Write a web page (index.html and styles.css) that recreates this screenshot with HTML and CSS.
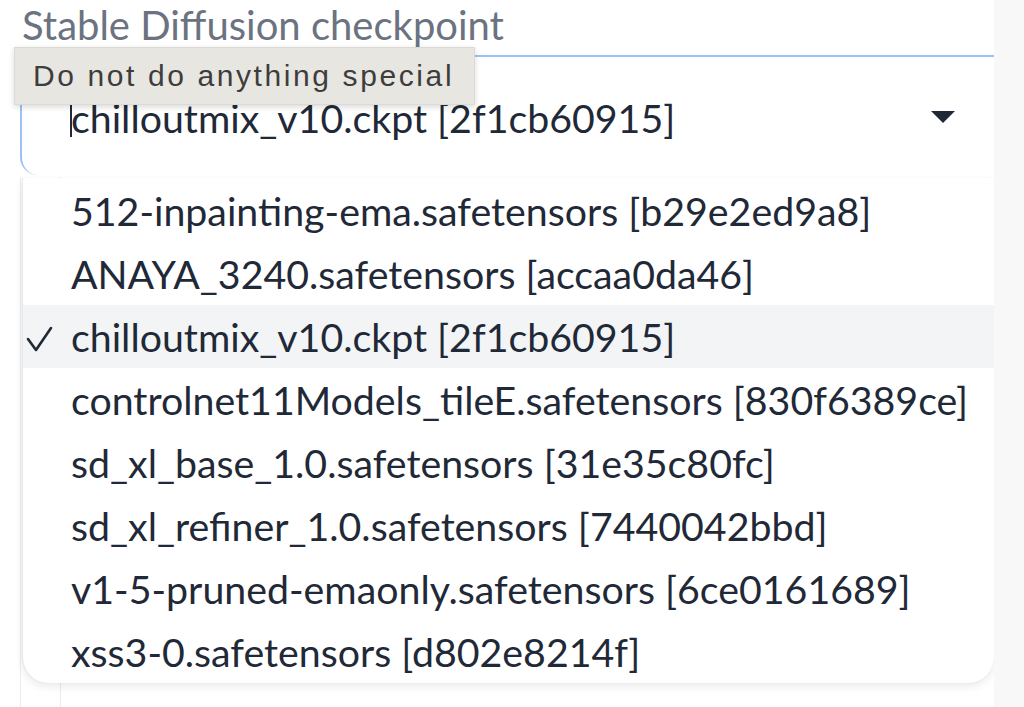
FILE: index.html
```html
<!DOCTYPE html>
<html>
<head>
<meta charset="utf-8">
<link rel="stylesheet" href="styles.css">
</head>
<body>
<div class="page">
  <div class="panel">
    <div class="label">Stable Diffusion checkpoint</div>
    <div class="field">
      <div class="value"><span class="caret"></span>chilloutmix_v10.ckpt [2f1cb60915]</div>
      <svg class="arrow" width="26" height="14" viewBox="0 0 26 14"><path d="M1 1 L25 1 L13 13 Z" fill="#1f2937"/></svg>
    </div>
    <div class="below">
      <div class="ghost"></div>
    </div>
    <ul class="options">
      <li class="opt">512-inpainting-ema.safetensors [b29e2ed9a8]</li>
      <li class="opt">ANAYA_3240.safetensors [accaa0da46]</li>
      <li class="opt selected"><svg class="check" width="30" height="30" viewBox="0 0 30 30"><path d="M2 14 L10 25 L25 3" fill="none" stroke="#1f2937" stroke-width="2.6" stroke-linecap="round" stroke-linejoin="round"/></svg>chilloutmix_v10.ckpt [2f1cb60915]</li>
      <li class="opt">controlnet11Models_tileE.safetensors [830f6389ce]</li>
      <li class="opt">sd_xl_base_1.0.safetensors [31e35c80fc]</li>
      <li class="opt">sd_xl_refiner_1.0.safetensors [7440042bbd]</li>
      <li class="opt">v1-5-pruned-emaonly.safetensors [6ce0161689]</li>
      <li class="opt">xss3-0.safetensors [d802e8214f]</li>
    </ul>
    <div class="tooltip">Do not do anything special</div>
  </div>
</div>
</body>
</html>
```
FILE: styles.css
```css
html, body {
  margin: 0;
  padding: 0;
  background: #f8f8f9;
  height: 707px;
  overflow: hidden;
}
.page {
  width: 994px;
  height: 707px;
  background: #ffffff;
  overflow: hidden;
}
.panel {
  position: relative;
  height: 707px;
  font-family: "Lato", "Noto Sans", sans-serif;
  color: #1f2937;
}
.label {
  padding: 0 0 0 22px;
  height: 55px;
  font-size: 40px;
  line-height: 50px;
  color: #6b7280;
}
.field {
  margin-left: 20px;
  height: 120px;
  border-top: 2px solid #9cc2f4;
  border-left: 2px solid #9cc2f4;
  border-bottom-left-radius: 18px;
  display: flex;
  align-items: center;
  justify-content: space-between;
  padding: 0 38px 0 49px;
  box-sizing: border-box;
}
.value {
  position: relative;
  font-size: 39.3px;
  line-height: 50px;
  margin-top: 4px;
}
.caret {
  position: absolute;
  left: -1px;
  top: 2px;
  width: 2px;
  height: 42px;
  background: #1f2937;
}
.arrow {
  display: block;
  margin-top: 2px;
}
.below {
  margin-top: 2px;
  margin-left: 20px;
  height: 530px;
  border-left: 1px solid #ececf0;
  display: flex;
}
.ghost {
  margin-left: 39px;
  border-left: 1px solid #ececf0;
  height: 100%;
}
.options {
  position: absolute;
  top: 178px;
  left: 22px;
  right: 0;
  margin: 0;
  padding: 1px 0 0;
  list-style: none;
  background: #ffffff;
  border-left: 1px solid #e5e7eb;
  border-radius: 0 0 26px 26px;
  box-shadow: 0 4px 8px rgba(0,0,0,0.08), 0 0 2px rgba(0,0,0,0.06);
}
.opt {
  position: relative;
  height: 63px;
  line-height: 63px;
  padding-left: 48px;
  font-size: 39.3px;
  white-space: nowrap;
  color: #1f2937;
}
.opt.selected {
  background: #f3f4f6;
}
.check {
  position: absolute;
  left: 3px;
  top: 20px;
}
.tooltip {
  position: absolute;
  left: 14px;
  top: 47px;
  width: 461px;
  height: 58px;
  box-sizing: border-box;
  padding-left: 18px;
  background: #e8e6e1;
  border: 1px solid #dcdad5;
  box-shadow: 0 2px 6px rgba(0,0,0,0.15);
  font-family: "Liberation Sans", "Helvetica", sans-serif;
  font-size: 30px;
  line-height: 56px;
  letter-spacing: 2.6px;
  color: #3d3d3d;
}
```
